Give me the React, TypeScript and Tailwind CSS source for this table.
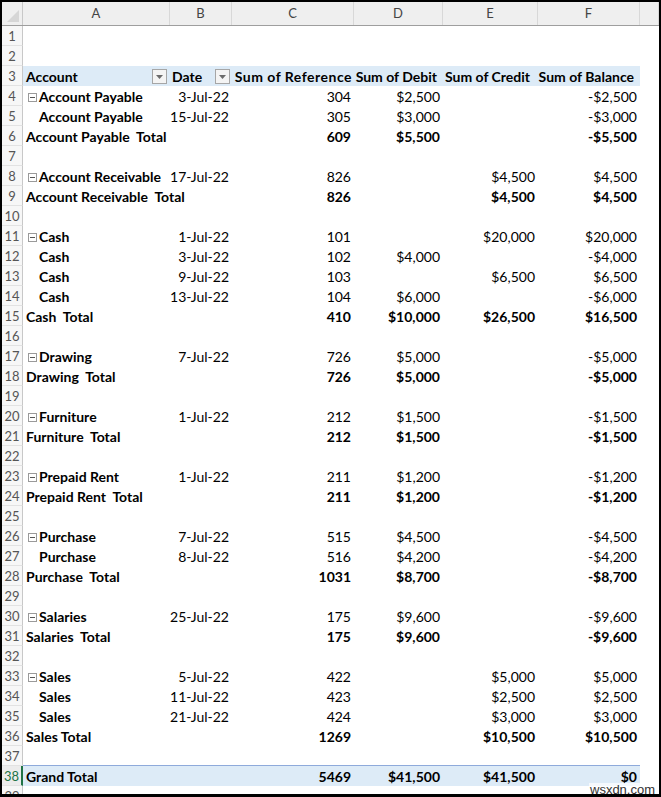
import React from "react";

type Kind = "blank" | "group" | "child" | "total" | "header" | "grand";
type Row = {
  n: number;
  kind: Kind;
  a?: string;
  b?: string;
  c?: string;
  d?: string;
  e?: string;
  f?: string;
  line?: "A" | "B";
};

const rows: Row[] = [
  { n: 1, kind: "blank" },
  { n: 2, kind: "blank" },
  { n: 3, kind: "header" },
  { n: 4, kind: "group", a: "Account Payable", b: "3-Jul-22", c: "304", d: "$2,500", f: "-$2,500" },
  { n: 5, kind: "child", a: "Account Payable", b: "15-Jul-22", c: "305", d: "$3,000", f: "-$3,000", line: "B" },
  { n: 6, kind: "total", a: "Account Payable\u00a0 Total", c: "609", d: "$5,500", f: "-$5,500", line: "A" },
  { n: 7, kind: "blank" },
  { n: 8, kind: "group", a: "Account Receivable", b: "17-Jul-22", c: "826", e: "$4,500", f: "$4,500", line: "B" },
  { n: 9, kind: "total", a: "Account Receivable\u00a0 Total", c: "826", e: "$4,500", f: "$4,500", line: "A" },
  { n: 10, kind: "blank" },
  { n: 11, kind: "group", a: "Cash", b: "1-Jul-22", c: "101", e: "$20,000", f: "$20,000" },
  { n: 12, kind: "child", a: "Cash", b: "3-Jul-22", c: "102", d: "$4,000", f: "-$4,000" },
  { n: 13, kind: "child", a: "Cash", b: "9-Jul-22", c: "103", e: "$6,500", f: "$6,500" },
  { n: 14, kind: "child", a: "Cash", b: "13-Jul-22", c: "104", d: "$6,000", f: "-$6,000", line: "A" },
  { n: 15, kind: "total", a: "Cash\u00a0 Total", c: "410", d: "$10,000", e: "$26,500", f: "$16,500", line: "A" },
  { n: 16, kind: "blank" },
  { n: 17, kind: "group", a: "Drawing", b: "7-Jul-22", c: "726", d: "$5,000", f: "-$5,000", line: "B" },
  { n: 18, kind: "total", a: "Drawing\u00a0 Total", c: "726", d: "$5,000", f: "-$5,000", line: "A" },
  { n: 19, kind: "blank" },
  { n: 20, kind: "group", a: "Furniture", b: "1-Jul-22", c: "212", d: "$1,500", f: "-$1,500", line: "B" },
  { n: 21, kind: "total", a: "Furniture\u00a0 Total", c: "212", d: "$1,500", f: "-$1,500", line: "A" },
  { n: 22, kind: "blank" },
  { n: 23, kind: "group", a: "Prepaid Rent", b: "1-Jul-22", c: "211", d: "$1,200", f: "-$1,200", line: "B" },
  { n: 24, kind: "total", a: "Prepaid Rent\u00a0 Total", c: "211", d: "$1,200", f: "-$1,200", line: "A" },
  { n: 25, kind: "blank" },
  { n: 26, kind: "group", a: "Purchase", b: "7-Jul-22", c: "515", d: "$4,500", f: "-$4,500" },
  { n: 27, kind: "child", a: "Purchase", b: "8-Jul-22", c: "516", d: "$4,200", f: "-$4,200", line: "B" },
  { n: 28, kind: "total", a: "Purchase\u00a0 Total", c: "1031", d: "$8,700", f: "-$8,700", line: "A" },
  { n: 29, kind: "blank" },
  { n: 30, kind: "group", a: "Salaries", b: "25-Jul-22", c: "175", d: "$9,600", f: "-$9,600", line: "B" },
  { n: 31, kind: "total", a: "Salaries\u00a0 Total", c: "175", d: "$9,600", f: "-$9,600", line: "A" },
  { n: 32, kind: "blank" },
  { n: 33, kind: "group", a: "Sales", b: "5-Jul-22", c: "422", e: "$5,000", f: "$5,000" },
  { n: 34, kind: "child", a: "Sales", b: "11-Jul-22", c: "423", e: "$2,500", f: "$2,500" },
  { n: 35, kind: "child", a: "Sales", b: "21-Jul-22", c: "424", e: "$3,000", f: "$3,000", line: "B" },
  { n: 36, kind: "total", a: "Sales Total", c: "1269", e: "$10,500", f: "$10,500", line: "A" },
  { n: 37, kind: "blank", line: "A" },
  { n: 38, kind: "grand", a: "Grand Total", c: "5469", d: "$41,500", e: "$41,500", f: "$0" },
  { n: 39, kind: "blank" },
];

const GRID = "grid grid-cols-[21px_147px_62px_122px_89px_95px_102px_19px]";

function MinusBox() {
  return (
    <span className="inline-flex w-[9px] h-[9px] border border-[#9a9a9a] bg-white items-center justify-center mr-[2px] mt-[6px] shrink-0">
      <span className="block w-[5px] h-px bg-[#555]" />
    </span>
  );
}

function DropBtn() {
  return (
    <span className="inline-flex w-[15px] h-[15px] border border-[#a6a6a6] bg-[#f4f4f4] items-center justify-center shrink-0">
      <svg width="7" height="4" viewBox="0 0 7 4">
        <path d="M0 0 L7 0 L3.5 4 Z" fill="#6b6b6b" />
      </svg>
    </span>
  );
}

function RowNum({ n, selected }: { n: number; selected?: boolean }) {
  return (
    <div
      className={`h-[20px] border-b border-[#e2e2e2] ${
        selected
          ? "border-r-2 border-r-[#217346] text-[#217346] bg-[#ececec]"
          : "border-r border-r-[#c8c8c8] text-[#555] bg-[#f7f7f7]"
      } text-[13px] leading-[19px] pt-[1px] text-center font-['Lato',sans-serif]`}
    >
      {n}
    </div>
  );
}

function DataRow({ r }: { r: Row }) {
  const bold = r.kind === "total" || r.kind === "grand";
  const lineA = r.line === "A" ? "border-b border-[#8eaadb]" : "";
  const lineB = r.line ? "border-b border-[#8eaadb]" : "";
  const bg = r.kind === "header" || r.kind === "grand" ? "bg-[#ddebf7]" : "bg-white";
  const numCls = `${bg} ${lineB} text-right pr-[3px] pt-[1px] ${bold ? "font-bold" : ""} leading-[20px] whitespace-nowrap`;
  const selected = r.n === 38;

  if (r.kind === "header") {
    return (
      <div className={`${GRID} h-[20px]`}>
        <RowNum n={r.n} />
        <div className={`${bg} flex items-center justify-between pl-[3px] pr-[3px] font-bold`}>
          <span className="leading-[20px] pt-[1px]">Account</span>
          <DropBtn />
        </div>
        <div className={`${bg} flex items-center justify-between pl-[2px] pr-[2px] font-bold`}>
          <span className="leading-[20px] pt-[1px]">Date</span>
          <DropBtn />
        </div>
        <div className={`${bg} text-right pr-[2px] pt-[1px] font-bold leading-[20px] whitespace-nowrap tracking-[0.5px]`}>
          Sum of Reference
        </div>
        <div className={`${bg} text-right pr-[6px] pt-[1px] font-bold leading-[20px] whitespace-nowrap`}>Sum of Debit</div>
        <div className={`${bg} text-right pr-[8px] pt-[1px] font-bold leading-[20px] whitespace-nowrap`}>Sum of Credit</div>
        <div className={`${bg} text-right pr-[6px] pt-[1px] font-bold leading-[20px] whitespace-nowrap`}>Sum of Balance</div>
        <div className="bg-white" />
      </div>
    );
  }

  return (
    <div className={`${GRID} h-[20px]`}>
      <RowNum n={r.n} selected={selected} />
      <div
        className={`${bg} ${lineA} relative z-10 flex items-start font-bold whitespace-pre pt-[1px] ${
          r.kind === "group" ? "pl-[5px]" : r.kind === "child" ? "pl-[16px]" : "pl-[3px]"
        }`}
      >
        {r.kind === "group" && <MinusBox />}
        {r.a && <span className="relative z-10 leading-[20px]">{r.a}</span>}
      </div>
      <div className={numCls}>{r.b ? <span className="font-normal">{r.b}</span> : null}</div>
      <div className={numCls}>{r.c}</div>
      <div className={numCls}>{r.d}</div>
      <div className={numCls}>{r.e}</div>
      <div className={numCls}>{r.f}</div>
      <div className="bg-white" />
    </div>
  );
}

export default function App() {
  const cols = ["A", "B", "C", "D", "E", "F", ""];
  return (
    <div className="w-[661px] h-[797px] bg-white">
      <div className="relative w-[661px] h-[797px] border-2 border-b-[3px] border-black overflow-hidden font-['Lato','Open_Sans',sans-serif] text-[14px] text-black">
        <div className={`${GRID} h-[24px] bg-[#efefef] border-b border-[#9e9e9e]`}>
          <div className="relative border-r border-[#c8c8c8]">
            <svg className="absolute right-[3px] bottom-[3px]" width="12" height="12" viewBox="0 0 12 12">
              <path d="M12 0 L12 12 L0 12 Z" fill="#d6d6d6" />
            </svg>
          </div>
          {cols.map((c, i) => (
            <div
              key={i}
              className="border-r border-[#d8d8d8] flex items-center justify-center text-[#444] text-[13px] font-['Lato',sans-serif]"
            >
              {c}
            </div>
          ))}
        </div>
        {rows.map((r) => (
          <DataRow key={r.n} r={r} />
        ))}
        <div className="absolute z-20 left-[587px] top-[781px] text-[13px] leading-[14px] text-[#333] font-['Liberation_Sans',sans-serif] bg-white/70 px-[1px]">
          wsxdn.com
        </div>
      </div>
    </div>
  );
}
